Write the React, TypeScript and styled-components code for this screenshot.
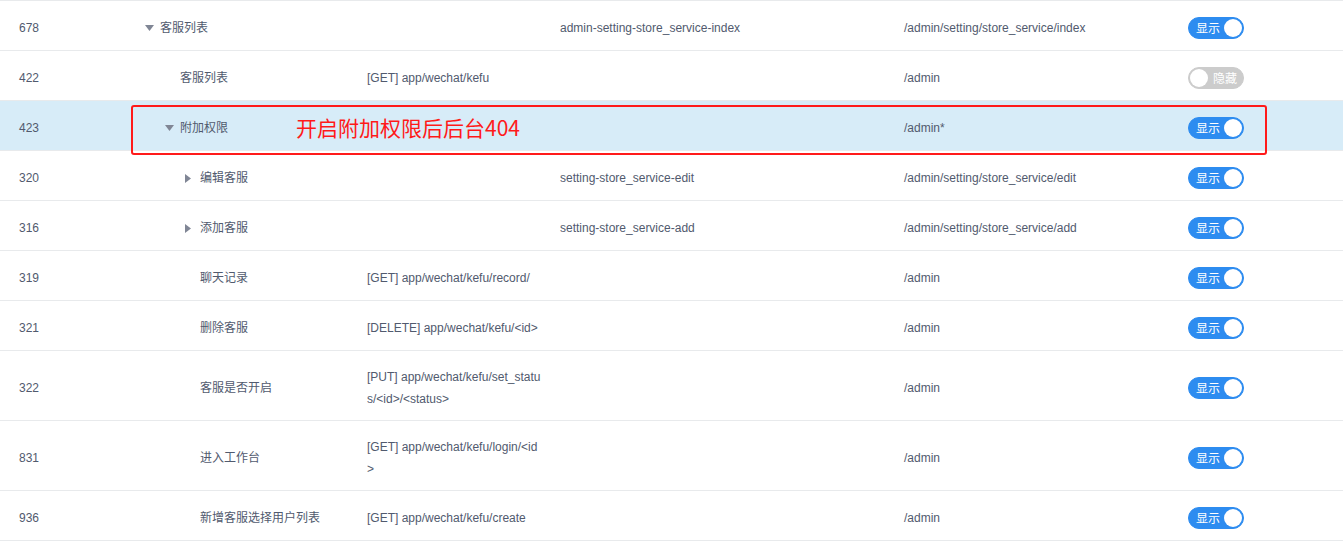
import React from "react";
import styled, { createGlobalStyle } from "styled-components";

interface IRow {
  id: number;
  name: string;
  level: number;
  arrow?: "down" | "right";
  path?: string;
  key?: string;
  route: string;
  on: boolean;
  note?: string;
}

const rows: IRow[] = [
  { id: 678, name: "客服列表", level: 1, arrow: "down", key: "admin-setting-store_service-index", route: "/admin/setting/store_service/index", on: true },
  { id: 422, name: "客服列表", level: 2, path: "[GET] app/wechat/kefu", route: "/admin", on: false },
  { id: 423, name: "附加权限", level: 2, arrow: "down", route: "/admin*", on: true, note: "开启附加权限后后台404" },
  { id: 320, name: "编辑客服", level: 3, arrow: "right", key: "setting-store_service-edit", route: "/admin/setting/store_service/edit", on: true },
  { id: 316, name: "添加客服", level: 3, arrow: "right", key: "setting-store_service-add", route: "/admin/setting/store_service/add", on: true },
  { id: 319, name: "聊天记录", level: 3, path: "[GET] app/wechat/kefu/record/", route: "/admin", on: true },
  { id: 321, name: "删除客服", level: 3, path: "[DELETE] app/wechat/kefu/<id>", route: "/admin", on: true },
  { id: 322, name: "客服是否开启", level: 3, path: "[PUT] app/wechat/kefu/set_status/<id>/<status>", route: "/admin", on: true },
  { id: 831, name: "进入工作台", level: 3, path: "[GET] app/wechat/kefu/login/<id>", route: "/admin", on: true },
  { id: 936, name: "新增客服选择用户列表", level: 3, path: "[GET] app/wechat/kefu/create", route: "/admin", on: true },
];

const GlobalStyle = createGlobalStyle`
  html, body {
    margin: 0;
    padding: 0;
    background: #fff;
  }
  body {
    font-family: "Liberation Sans", "Noto Sans CJK SC", sans-serif;
    font-size: 12px;
    color: #515a6e;
  }
`;

function Arrow({ dir }: { dir: "down" | "right" }) {
  return (
    <ArrowSlot>
      {dir === "down" ? (
        <svg width="9" height="6" viewBox="0 0 9 6">
          <path d="M0 0 L9 0 L4.5 6 Z" fill="#808695" />
        </svg>
      ) : (
        <svg width="6" height="9" viewBox="0 0 6 9">
          <path d="M0 0 L6 4.5 L0 9 Z" fill="#808695" />
        </svg>
      )}
    </ArrowSlot>
  );
}

function Switch({ on }: { on: boolean }) {
  return (
    <Track on={on}>
      <SwitchText on={on}>{on ? "显示" : "隐藏"}</SwitchText>
      <Knob on={on} />
    </Track>
  );
}

function App() {
  return (
    <>
      <GlobalStyle />
      <Table>
        {rows.map((r) => (
          <Row key={r.id} highlight={!!r.note}>
            <IdCell>{r.id}</IdCell>
            <NameCell>
              <NameInner level={r.level}>
                {r.arrow ? <Arrow dir={r.arrow} /> : <ArrowSlot />}
                <span>{r.name}</span>
              </NameInner>
            </NameCell>
            <PathCell>{r.path}</PathCell>
            <KeyCell>{r.key}</KeyCell>
            <RouteCell>{r.route}</RouteCell>
            <StatusCell>
              <Switch on={r.on} />
            </StatusCell>
            {r.note && (
              <Annotation>
                <NoteText>{r.note}</NoteText>
              </Annotation>
            )}
          </Row>
        ))}
      </Table>
    </>
  );
}

export default App;

const Table = styled.div`
  width: 1343px;
  border-top: 1px solid #e8eaec;
`;

const Row = styled.div<{ highlight: boolean }>`
  position: relative;
  display: grid;
  grid-template-columns: 140px 227px 193px 344px 284px 1fr;
  border-bottom: 1px solid #e8eaec;
  background: ${(p) => (p.highlight ? "#d7ecf8" : "#fff")};
`;

const Cell = styled.div`
  display: flex;
  align-items: center;
  min-height: 49px;
  box-sizing: border-box;
  padding: 15px 0 10px;
  line-height: 22px;
`;

const IdCell = styled(Cell)`
  padding-left: 19px;
`;

const NameCell = styled(Cell)``;

const NameInner = styled.div<{ level: number }>`
  display: flex;
  align-items: center;
  padding-left: ${(p) => 5 + (p.level - 1) * 20}px;
`;

const ArrowSlot = styled.span`
  display: inline-flex;
  align-items: center;
  width: 15px;
  height: 22px;
`;

const PathCell = styled(Cell)`
  padding-right: 18px;
  word-break: break-all;
`;

const KeyCell = styled(Cell)``;

const RouteCell = styled(Cell)``;

const StatusCell = styled(Cell)``;

const Track = styled.span<{ on: boolean }>`
  position: relative;
  display: inline-block;
  width: 56px;
  height: 22px;
  box-sizing: border-box;
  border-radius: 11px;
  border: 1px solid ${(p) => (p.on ? "#2d8cf0" : "#ccc")};
  background: ${(p) => (p.on ? "#2d8cf0" : "#ccc")};
`;

const SwitchText = styled.span<{ on: boolean }>`
  position: absolute;
  top: 0;
  ${(p) => (p.on ? "left: 7px;" : "right: 6px;")}
  font-family: "Noto Sans CJK SC", sans-serif;
  font-size: 12px;
  line-height: 20px;
  color: #fff;
`;

const Knob = styled.span<{ on: boolean }>`
  position: absolute;
  top: 1px;
  ${(p) => (p.on ? "right: 1px;" : "left: 1px;")}
  width: 18px;
  height: 18px;
  border-radius: 50%;
  background: #fff;
`;

const Annotation = styled.div`
  position: absolute;
  z-index: 1;
  left: 131px;
  top: 4px;
  width: 1136px;
  height: 50px;
  box-sizing: border-box;
  border: 2px solid #ff1a1a;
  border-radius: 3px;
  pointer-events: none;
`;

const NoteText = styled.span`
  position: absolute;
  left: 163px;
  top: 6px;
  font-family: "Noto Sans CJK SC", sans-serif;
  font-size: 21px;
  line-height: 28px;
  color: #ff1a1a;
`;
